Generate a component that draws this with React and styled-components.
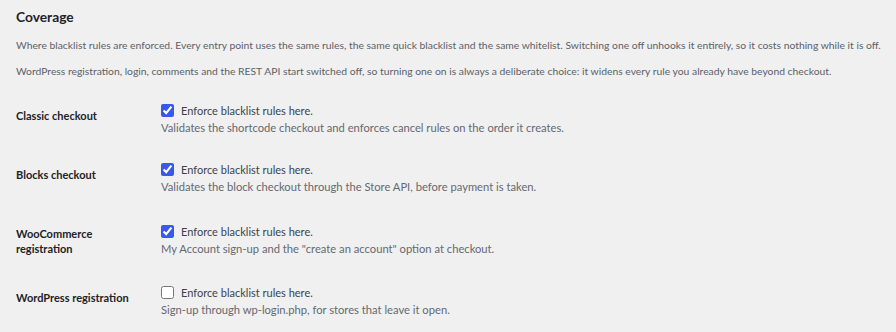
import React from "react";
import styled, { createGlobalStyle } from "styled-components";

const GlobalStyle = createGlobalStyle`
  html, body { margin: 0; padding: 0; background: #f0f0f1; }
  body { font-family: Lato, "Liberation Sans", sans-serif; color: #3c434a; }
`;

const Page = styled.div`
  padding: 7px 16px 0 16px;
  min-height: 332px;
  box-sizing: border-box;
`;

const Title = styled.h2`
  margin: 0;
  font-size: 13.8px;
  line-height: 20px;
  font-weight: 700;
  color: #1d2327;
`;

const Intro = styled.p`
  margin: 10px 0 0 0;
  font-size: 10.34px;
  line-height: 16px;
  color: #5b6168;
  white-space: nowrap;
`;

const Table = styled.div`
  margin-top: 11px;
  display: flex;
  flex-direction: column;
`;

const Row = styled.div`
  display: grid;
  grid-template-columns: 145px 1fr;
`;

const Th = styled.div`
  padding: 18px 24px 16px 0;
  font-size: 11px;
  line-height: 15px;
  font-weight: 700;
  color: #1d2327;
`;

const Td = styled.div`
  align-self: center;
  padding: 13px 0;
  display: flex;
  flex-direction: column;
  gap: 2px;
`;

const CheckLabel = styled.label`
  display: flex;
  align-items: center;
  gap: 7px;
  height: 15px;
  font-size: 11px;
  line-height: 15px;
  color: #3c434a;
`;

const Box = styled.input.attrs({ type: "checkbox" })`
  width: 13px;
  height: 13px;
  margin: 0;
  accent-color: #3858e9;
  flex: none;
`;

const Desc = styled.p`
  margin: 0;
  font-size: 11.2px;
  line-height: 16px;
  color: #646970;
`;

const rows = [
  {
    label: "Classic checkout",
    checked: true,
    desc: "Validates the shortcode checkout and enforces cancel rules on the order it creates.",
  },
  {
    label: "Blocks checkout",
    checked: true,
    desc: "Validates the block checkout through the Store API, before payment is taken.",
  },
  {
    label: "WooCommerce registration",
    checked: true,
    desc: "My Account sign-up and the \"create an account\" option at checkout.",
  },
  {
    label: "WordPress registration",
    checked: false,
    desc: "Sign-up through wp-login.php, for stores that leave it open.",
  },
];

export default function App() {
  return (
    <>
      <GlobalStyle />
      <Page>
        <Title>Coverage</Title>
        <Intro>
          Where blacklist rules are enforced. Every entry point uses the same rules, the same quick blacklist and the same whitelist. Switching one off unhooks it entirely, so it costs nothing while it is off.
        </Intro>
        <Intro>
          WordPress registration, login, comments and the REST API start switched off, so turning one on is always a deliberate choice: it widens every rule you already have beyond checkout.
        </Intro>
        <Table>
          {rows.map((r) => (
            <Row key={r.label}>
              <Th>{r.label}</Th>
              <Td>
                <CheckLabel>
                  <Box defaultChecked={r.checked} />
                  Enforce blacklist rules here.
                </CheckLabel>
                <Desc>{r.desc}</Desc>
              </Td>
            </Row>
          ))}
        </Table>
      </Page>
    </>
  );
}
